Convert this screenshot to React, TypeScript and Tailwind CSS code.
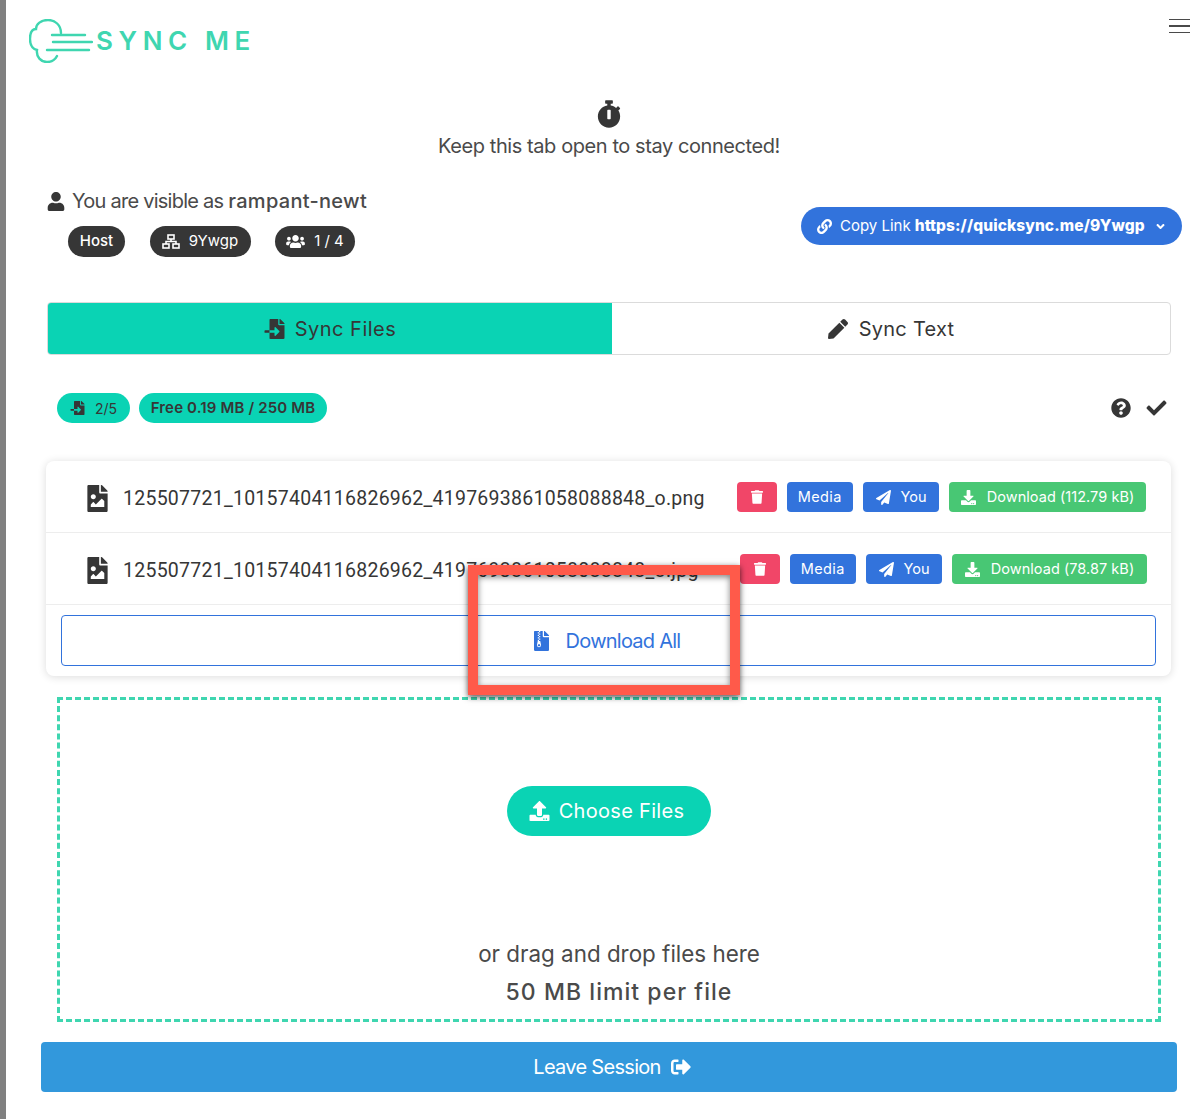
import {
  FaAngleDown,
  FaCheck,
  FaDownload,
  FaFileArchive,
  FaFileImage,
  FaFileImport,
  FaLink,
  FaPaperPlane,
  FaPen,
  FaQuestionCircle,
  FaSignOutAlt,
  FaStopwatch,
  FaTrash,
  FaUpload,
  FaUser,
  FaUsers,
} from "react-icons/fa"

const Logo = () => (
  <div className="flex items-start">
    <svg width="64" height="44" viewBox="29 19 64 44" fill="none" stroke="#3fd6b0" strokeWidth="2.4" strokeLinecap="round">
      <path d="M61 33C61 25 55 20 48 20C41 20 36 24 36 29C31 29 30 34 30 39C30 45 33 49 37 50C36 57 41 62 47 62C52 62 55 60 57 56" />
      <path d="M52 35H85" />
      <path d="M53 42H92" />
      <path d="M47 50H89" />
    </svg>
    <span className="ml-[3px] mt-[7px] text-[26px] leading-[30px] font-semibold tracking-[5.6px] text-[#3fd6b0] whitespace-nowrap">SYNC ME</span>
  </div>
)

const NetworkIcon = () => (
  <svg width="18" height="15" viewBox="0 0 18 15" fill="none" stroke="white" strokeWidth="1.6">
    <rect x="6" y="1" width="6" height="4" />
    <rect x="1" y="10" width="6" height="4" />
    <rect x="11" y="10" width="6" height="4" />
    <path d="M9 5V7.5M4 10V7.5H14V10" />
  </svg>
)

const Pill = ({ children, className }: { children: React.ReactNode; className: string }) => (
  <div className={`h-[31px] rounded-full bg-[#363636] text-white text-[15px] flex items-center justify-center gap-[9px] ${className}`}>
    {children}
  </div>
)

const FileRow = ({ name, size, nudge, dlWidth }: { name: string; size: string; nudge: string; dlWidth: string }) => (
  <div className="h-[72px] border-b border-[#ededed] flex items-center pt-[1px] pl-[41px] pr-[24px]">
    <FaFileImage className="mt-[3px] w-[21px] h-[27px] text-[#363636] shrink-0" />
    <span className="mt-[3px] ml-[15px] text-[19.5px] text-[#363636] whitespace-nowrap font-['Roboto',sans-serif] tracking-[0.25px]">{name}</span>
    <div className={`ml-auto flex items-center gap-[10px] text-[14.5px] text-white ${nudge}`}>
      <div className="w-[40px] h-[30px] rounded bg-[#f14668] flex items-center justify-center">
        <FaTrash className="w-[12px] h-[14px]" />
      </div>
      <div className="w-[66.5px] h-[30px] rounded bg-[#3273dc] flex items-center justify-center tracking-[0.4px]">Media</div>
      <div className="w-[76px] h-[30px] rounded bg-[#3273dc] flex items-center justify-center gap-[10px]">
        <FaPaperPlane className="w-[15px] h-[15px]" />
        You
      </div>
      <div className={`h-[30px] rounded bg-[#48c774] flex items-center justify-center gap-[11px] tracking-[0.05px] ${dlWidth}`}>
        <FaDownload className="w-[15px] h-[15px]" />
        {size}
      </div>
    </div>
  </div>
)

export default function App() {
  return (
    <div className="relative min-h-[1119px] border-l-[6px] border-[#808080] bg-white text-[#4a4a4a] font-['Inter',sans-serif] overflow-hidden">
      <header className="h-[100px] flex justify-between items-start pt-[19px] pl-[23px] pr-[10px]">
        <Logo />
        <div className="w-[21px] flex flex-col gap-[5px]">
          <span className="h-[1px] bg-[#4a4a4a]" />
          <span className="h-[2px] bg-[#4a4a4a]" />
          <span className="h-[1px] bg-[#4a4a4a]" />
        </div>
      </header>

      <main className="ml-[41px] w-[1124px]">
        <div className="flex flex-col items-center">
          <FaStopwatch className="w-[24px] h-[28px] text-[#363636]" />
          <p className="mt-[4px] text-[20px] leading-[28px] tracking-[-0.42px]">Keep this tab open to stay connected!</p>
        </div>

        <div className="mt-[27px] flex justify-between items-start">
          <div>
            <div className="h-[28px] flex items-center text-[20px]">
              <FaUser className="w-[18px] h-[19px] text-[#363636]" />
              <span className="ml-[7px] tracking-[-0.75px]">You are visible as <span className="font-medium tracking-[0.3px]">rampant-newt</span></span>
            </div>
            <div className="mt-[11px] ml-[21px] flex gap-[24.5px]">
              <Pill className="w-[57px] font-medium">Host</Pill>
              <Pill className="w-[101px]"><NetworkIcon />9Ywgp</Pill>
              <Pill className="w-[80px]"><FaUsers className="w-[19px] h-[15px]" />1 / 4</Pill>
            </div>
          </div>
          <div className="mt-[20px] -mr-[11px] w-[381px] h-[38px] rounded-full bg-[#3273dc] text-white flex items-center pl-[16px]">
            <FaLink className="w-[15px] h-[15px]" />
            <span className="ml-[8px] text-[15px]">Copy Link</span>
            <span className="ml-[4px] text-[15.5px] font-extrabold tracking-[0.1px]">https://quicksync.me/9Ywgp</span>
            <FaAngleDown className="ml-[9px] w-[13px] h-[13px]" />
          </div>
        </div>

        <div className="mt-[45px] h-[53px] flex rounded border border-[#dbdbdb] text-[20px] overflow-hidden">
          <div className="w-[564px] bg-[#0ad3b4] flex items-center justify-center gap-[10px] text-[#363636] tracking-[0.5px]">
            <FaFileImport className="w-[21px] h-[20px]" />
            Sync Files
          </div>
          <div className="flex-1 flex items-center justify-center gap-[11px] text-[#363636] tracking-[0.25px]">
            <FaPen className="w-[20px] h-[20px]" />
            Sync Text
          </div>
        </div>

        <div className="mt-[38px] pl-[10px] flex items-center">
          <div className="w-[73px] h-[30px] rounded-full bg-[#0ad3b4] text-[#363636] text-[14px] flex items-center justify-center gap-[10px]">
            <FaFileImport className="w-[15px] h-[14px]" />
            2/5
          </div>
          <div className="ml-[9px] w-[188px] h-[30px] rounded-full bg-[#0ad3b4] text-[#363636] text-[15px] tracking-[0.15px] font-semibold flex items-center justify-center">
            Free 0.19 MB / 250 MB
          </div>
          <FaQuestionCircle className="ml-auto w-[20px] h-[20px] text-[#363636]" />
          <FaCheck className="ml-[15px] mr-[4px] w-[21px] h-[20px] text-[#363636]" />
        </div>

        <div className="mt-[38px] -ml-[1px] w-[1125px] h-[215px] rounded-lg bg-white shadow-[0_1px_8px_rgba(10,10,10,0.14)]">
          <FileRow name="125507721_10157404116826962_4197693861058088848_o.png" size="Download (112.79 kB)" nudge="mr-[1px]" dlWidth="w-[197px]" />
          <FileRow name="125507721_10157404116826962_4197693861058088848_o.jpg" size="Download (78.87 kB)" nudge="" dlWidth="w-[195px]" />
          <div className="mx-[15px] mt-[10px] h-[51px] rounded border border-[#3273dc] text-[#3273dc] text-[20px] tracking-[-0.75px] flex items-center justify-center gap-[17px] pr-[3px]">
            <FaFileArchive className="w-[15px] h-[20px]" />
            Download All
          </div>
        </div>

        <div className="mt-[21px] ml-[10px] w-[1104px] h-[325px] border-[3px] border-dashed border-[#3fd6b0] flex flex-col items-center">
          <div className="mt-[86px] pr-[5px] w-[204px] h-[50px] rounded-full bg-[#0ad3b4] text-white text-[20px] tracking-[0.3px] flex items-center justify-center gap-[9px]">
            <FaUpload className="w-[21px] h-[20px]" />
            Choose Files
          </div>
          <p className="mt-[104px] pl-[20px] text-[22.4px] leading-[28px]">or drag and drop files here</p>
          <p className="mt-[10px] pl-[20px] text-[23px] leading-[28px] font-medium tracking-[1.05px]">50 MB limit per file</p>
        </div>

        <div className="mt-[20px] -ml-[6px] pl-[6px] w-[1136px] h-[50px] rounded bg-[#3298dc] text-white text-[20px] tracking-[-0.7px] flex items-center justify-center gap-[10px]">
          Leave Session
          <FaSignOutAlt className="w-[20px] h-[20px]" />
        </div>
      </main>

      <div className="absolute left-[462px] top-[565px] w-[272px] h-[130px] border-[10px] border-[#ff5a4a] shadow-[0_2px_6px_rgba(0,0,0,0.7),inset_0_2px_6px_rgba(0,0,0,0.5)]" />
    </div>
  )
}
